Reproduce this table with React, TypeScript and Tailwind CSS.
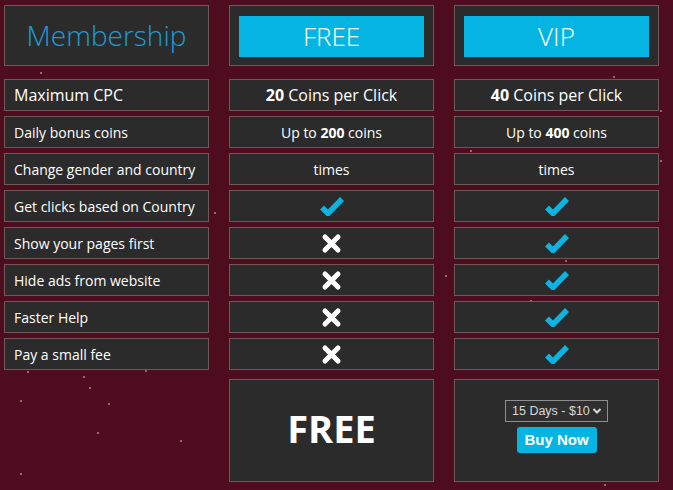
const rows: { label: string; big?: boolean; free: React.ReactNode; vip: React.ReactNode }[] = [
  {
    label: "Maximum CPC",
    big: true,
    free: (
      <span className="text-[16px]">
        <b>20</b> Coins per Click
      </span>
    ),
    vip: (
      <span className="text-[16px]">
        <b>40</b> Coins per Click
      </span>
    ),
  },
  {
    label: "Daily bonus coins",
    free: (
      <span>
        Up to <b>200</b> coins
      </span>
    ),
    vip: (
      <span>
        Up to <b>400</b> coins
      </span>
    ),
  },
  { label: "Change gender and country", free: "times", vip: "times" },
  { label: "Get clicks based on Country", free: <Check />, vip: <Check /> },
  { label: "Show your pages first", free: <Cross />, vip: <Check /> },
  { label: "Hide ads from website", free: <Cross />, vip: <Check /> },
  { label: "Faster Help", free: <Cross />, vip: <Check /> },
  { label: "Pay a small fee", free: <Cross />, vip: <Check /> },
];

// little dust dots over the background
const stars = [
  [40, 72], [92, 9], [180, 18], [111, 117], [175, 88], [300, 118], [470, 150],
  [613, 76], [660, 160], [214, 212], [20, 230], [130, 290], [300, 240], [565, 260],
  [445, 275], [27, 371], [83, 376], [89, 387], [20, 400], [108, 403], [97, 432],
  [20, 473], [145, 370], [198, 236], [530, 300], [386, 290], [240, 305], [630, 410],
  [390, 394], [427, 443], [497, 449], [604, 484], [660, 110], [180, 440], [650, 8],
];

function Check() {
  return (
    <svg width="24" height="20" viewBox="0 0 24 20">
      <path d="M2 11.5 L8 17.5 L22 3" fill="none" stroke="#0db4e2" strokeWidth="5.5" strokeLinejoin="miter" />
    </svg>
  );
}

function Cross() {
  return (
    <svg width="21" height="21" viewBox="0 0 21 21">
      <path d="M4 4 L17 17 M17 4 L4 17" fill="none" stroke="#ffffff" strokeWidth="5" strokeLinecap="round" />
    </svg>
  );
}

const cell = "h-[32px] flex items-center bg-[#2b2b2b] border border-[#6e5858] text-white";

export default function App() {
  return (
    <div
      className="relative w-[673px] h-[490px] overflow-hidden bg-[#4e0d1f] pl-[4px] pt-[5px]"
      style={{ fontFamily: '"Open Sans", sans-serif' }}
    >
      {stars.map(([x, y], i) => (
        <span
          key={i}
          className="absolute w-[2px] h-[2px] rounded-full bg-[#d8b8c0] opacity-70"
          style={{ left: x, top: y }}
        />
      ))}

      <div className="relative flex flex-col">
        <div className="grid grid-cols-[205px_205px_205px] gap-x-[20px]">
          <div className="h-[61px] flex items-center justify-center bg-[#2b2b2b] border border-[#6e5858]">
            <span className="text-[28px] font-light text-[#1d9bd6] -mt-[2px]">Membership</span>
          </div>
          <div className="h-[61px] bg-[#2b2b2b] border border-[#6e5858] pt-[10px] px-[9px]">
            <div className="h-[41px] bg-[#04b5e3] flex items-center justify-center text-white text-[26px] font-light">
              FREE
            </div>
          </div>
          <div className="h-[61px] bg-[#2b2b2b] border border-[#6e5858] pt-[10px] px-[9px]">
            <div className="h-[41px] bg-[#04b5e3] flex items-center justify-center text-white text-[26px] font-light">
              VIP
            </div>
          </div>
        </div>

        <div className="mt-[13px] flex flex-col gap-[5px]">
          {rows.map((r) => (
            <div key={r.label} className="grid grid-cols-[205px_205px_205px] gap-x-[20px]">
              <div className={`${cell} pl-[9px] ${r.big ? "text-[16px]" : "text-[14px]"}`}>{r.label}</div>
              <div className={`${cell} justify-center text-[14px]`}>{r.free}</div>
              <div className={`${cell} justify-center text-[14px]`}>{r.vip}</div>
            </div>
          ))}
        </div>

        <div className="mt-[9px] grid grid-cols-[205px_205px_205px] gap-x-[20px]">
          <div />
          <div className="h-[103px] flex items-center justify-center bg-[#2b2b2b] border border-[#6e5858]">
            <span className="text-[38px] font-bold text-white -mt-[4px]">FREE</span>
          </div>
          <div className="h-[103px] flex flex-col items-center pt-[20px] gap-[5px] bg-[#2b2b2b] border border-[#6e5858]">
            <div
              className="w-[103px] h-[22px] flex items-center justify-between pl-[6px] pr-[5px] border border-[#8e8e8e] bg-[#2f2f2f] text-[#d8d8d8] text-[12.5px]"
              style={{ fontFamily: '"Liberation Sans", Arial, sans-serif' }}
            >
              <span>15 Days - $10</span>
              <svg width="10" height="8" viewBox="0 0 10 8">
                <path d="M1.5 2 L5 5.5 L8.5 2" fill="none" stroke="#d8d8d8" strokeWidth="2" />
              </svg>
            </div>
            <div
              className="w-[80px] h-[26px] flex items-center justify-center rounded-[3px] bg-[#04b5e3] text-white font-bold text-[15px]"
              style={{ fontFamily: '"Liberation Sans", Arial, sans-serif' }}
            >
              Buy Now
            </div>
          </div>
        </div>
      </div>
    </div>
  );
}
